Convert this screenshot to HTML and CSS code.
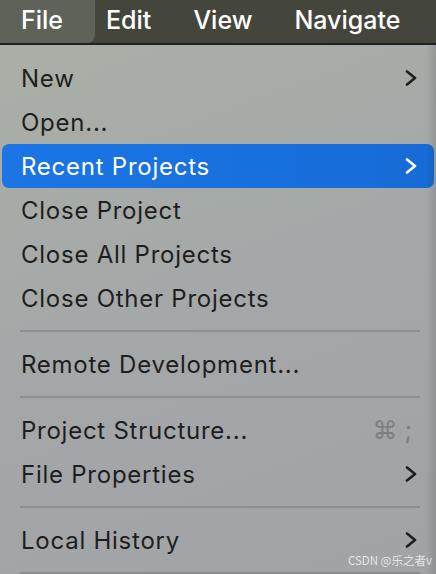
FILE: index.html
```html
<!DOCTYPE html>
<html>
<head>
<meta charset="utf-8">
<link rel="stylesheet" href="styles.css">
</head>
<body>
<div class="screen">
  <nav class="menubar">
    <span class="mb-item active">File</span>
    <span class="mb-item">Edit</span>
    <span class="mb-item">View</span>
    <span class="mb-item">Navigate</span>
  </nav>
  <ul class="menu">
    <li class="item"><span>New</span><svg class="chev" viewBox="0 0 12 16"><path d="M2 1.5 L10 8 L2 14.5"/></svg></li>
    <li class="item"><span>Open...</span></li>
    <li class="item selected"><span>Recent Projects</span><svg class="chev" viewBox="0 0 12 16"><path d="M2 1.5 L10 8 L2 14.5"/></svg></li>
    <li class="item"><span>Close Project</span></li>
    <li class="item"><span>Close All Projects</span></li>
    <li class="item"><span>Close Other Projects</span></li>
    <li class="sep"></li>
    <li class="item"><span>Remote Development...</span></li>
    <li class="sep"></li>
    <li class="item"><span>Project Structure...</span><span class="shortcut">⌘ ;</span></li>
    <li class="item"><span>File Properties</span><svg class="chev" viewBox="0 0 12 16"><path d="M2 1.5 L10 8 L2 14.5"/></svg></li>
    <li class="sep"></li>
    <li class="item"><span>Local History</span><svg class="chev" viewBox="0 0 12 16"><path d="M2 1.5 L10 8 L2 14.5"/></svg></li>
    <li class="sep"></li>
  </ul>
  <div class="watermark">CSDN @乐之者v</div>
</div>
</body>
</html>
```
FILE: styles.css
```css
html, body {
  margin: 0;
  padding: 0;
}
body {
  width: 436px;
  height: 574px;
  overflow: hidden;
  font-family: Inter, "Noto Sans", "Noto Sans CJK SC", sans-serif;
}
.screen {
  position: relative;
  width: 436px;
  height: 574px;
  overflow: hidden;
  background: linear-gradient(160deg, #abb0a6 0%, #a6aaa8 35%, #a3a5a8 70%, #a1a3a5 100%);
}
.screen::after {
  content: "";
  position: absolute;
  top: 45px;
  right: 0;
  width: 10px;
  bottom: 0;
  background: linear-gradient(90deg, rgba(0,0,0,0) 0%, rgba(0,0,0,0.12) 100%);
}
.menubar {
  display: flex;
  align-items: stretch;
  height: 43px;
  background: #45463b;
  border-bottom: 2px solid #1f2220;
}
.mb-item {
  display: flex;
  align-items: center;
  color: #ffffff;
  font-size: 25px;
  font-weight: 500;
  padding: 0 21px 4px 21px;
}
.mb-item.active {
  background: #5e6258;
  border-bottom-right-radius: 8px;
  padding-left: 21px;
  padding-right: 32px;
}
.mb-item:nth-child(2) { padding-left: 11px; }
.menu {
  list-style: none;
  margin: 0;
  padding: 11px 2px 0 2px;
}
.item {
  display: flex;
  align-items: center;
  justify-content: space-between;
  height: 44px;
  padding: 0 17px 0 19px;
  font-size: 24px;
  letter-spacing: 0.75px;
  color: #1e1e1e;
  border-radius: 7px;
}
.item.selected {
  background: linear-gradient(90deg, #1b75e4 0%, #1870de 60%, #176bd6 100%);
  color: #ffffff;
}
.chev {
  width: 12px;
  height: 16px;
  fill: none;
  stroke: #1e1e1e;
  stroke-width: 2.6;
  stroke-linecap: round;
  stroke-linejoin: round;
}
.selected .chev {
  stroke: #ffffff;
}
.shortcut {
  color: #7c7e80;
  font-size: 25px;
  letter-spacing: 0;
  padding-right: 5px;
}
.sep {
  height: 22px;
  display: flex;
  align-items: center;
  padding: 0 14px 0 18px;
}
.sep::before {
  content: "";
  display: block;
  width: 100%;
  height: 2px;
  background: rgba(60, 62, 66, 0.22);
}
.watermark {
  position: absolute;
  right: 4px;
  bottom: 6px;
  font-size: 11.5px;
  color: rgba(255, 255, 255, 0.75);
  font-family: "Noto Sans CJK SC", "Noto Sans", sans-serif;
}
```
